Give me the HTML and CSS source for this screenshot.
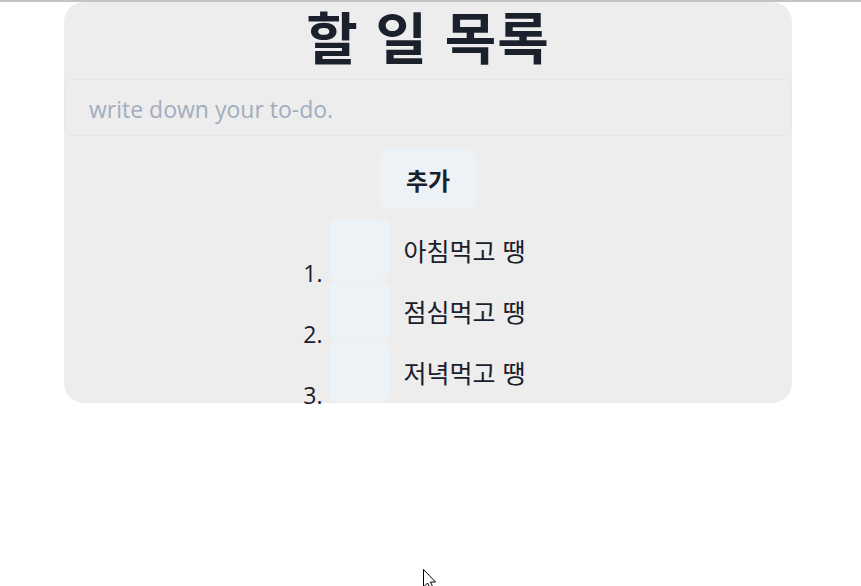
FILE: index.html
```html
<!DOCTYPE html>
<html lang="ko">
<head>
<meta charset="utf-8">
<title>할 일 목록</title>
<link rel="stylesheet" href="styles.css">
</head>
<body>
<div class="topline"></div>
<main class="card">
  <h1 class="title">할 일 목록</h1>
  <input class="todo-input" type="text" placeholder="write down your to-do.">
  <div class="actions"><button class="add-btn">추가</button></div>
  <ol class="todo-list">
    <li class="todo-item"><button class="done-btn"></button><span class="todo-text">아침먹고 땡</span></li>
    <li class="todo-item"><button class="done-btn"></button><span class="todo-text">점심먹고 땡</span></li>
    <li class="todo-item"><button class="done-btn"></button><span class="todo-text">저녁먹고 땡</span></li>
  </ol>
</main>
<svg class="cursor" width="14" height="20" viewBox="0 0 14 20"><path d="M0.5 0.5 L0.5 18 L4.5 14 L7.5 19.5 L10 18.5 L7.5 13 L12.5 13 Z" fill="#fff" stroke="#000" stroke-width="1"/></svg>
</body>
</html>
```
FILE: styles.css
```css
html, body {
  margin: 0;
  padding: 0;
  background: #ffffff;
}
body {
  font-family: "Open Sans", "Noto Sans CJK KR", sans-serif;
  color: #1a202c;
  position: relative;
  height: 586px;
  overflow: hidden;
}
.topline {
  height: 2px;
  background: #c4c4c4;
}
.card {
  width: 728px;
  margin: 0 0 0 64px;
  background: #ededed;
  border-radius: 20px;
  height: 401px;
  display: flex;
  flex-direction: column;
  align-items: center;
}
.title {
  margin: -6px 0 6px 0;
  font-family: "Noto Sans CJK KR", sans-serif;
  font-size: 56px;
  font-weight: 700;
  line-height: 77px;
  height: 77px;
  color: #1a202c;
  letter-spacing: 1px;
}
.todo-input {
  box-sizing: border-box;
  width: 100%;
  height: 59px;
  margin: 0;
  padding: 3px 24px 0 24px;
  border: 1px solid #e2e8f0;
  border-radius: 6px;
  background: transparent;
  font-family: "Open Sans", sans-serif;
  font-size: 23px;
  color: #1a202c;
  outline: none;
}
.todo-input::placeholder {
  color: #a0aec0;
}
.actions {
  margin-top: 13px;
}
.add-btn {
  display: block;
  width: 96px;
  height: 60px;
  border: none;
  border-radius: 8px;
  background: #edf2f7;
  font-family: "Noto Sans CJK KR", sans-serif;
  font-size: 24px;
  font-weight: 700;
  color: #1a202c;
  padding: 0;
}
.todo-list {
  margin: 11px 0 0 0;
  padding: 0;
  list-style: none;
  counter-reset: item;
  font-family: "Noto Sans CJK KR", sans-serif;
  font-size: 25px;
  color: #1a202c;
}
.todo-item {
  display: flex;
  align-items: flex-start;
  height: 61px;
  counter-increment: item;
}
.todo-item::before {
  content: counter(item) ".";
  font-family: "Open Sans", sans-serif;
  font-size: 23px;
  line-height: 24px;
  width: 30px;
  margin-left: -30px;
  padding-right: 8px;
  box-sizing: border-box;
  text-align: right;
  align-self: flex-end;
  margin-bottom: -4px;
}
.done-btn {
  width: 59px;
  height: 60px;
  border: none;
  border-radius: 6px;
  background: #edf2f7;
  padding: 0;
  flex: none;
}
.todo-text {
  margin-left: 14px;
  line-height: 60px;
  height: 60px;
}
.cursor {
  position: absolute;
  left: 423px;
  top: 569px;
}
```
